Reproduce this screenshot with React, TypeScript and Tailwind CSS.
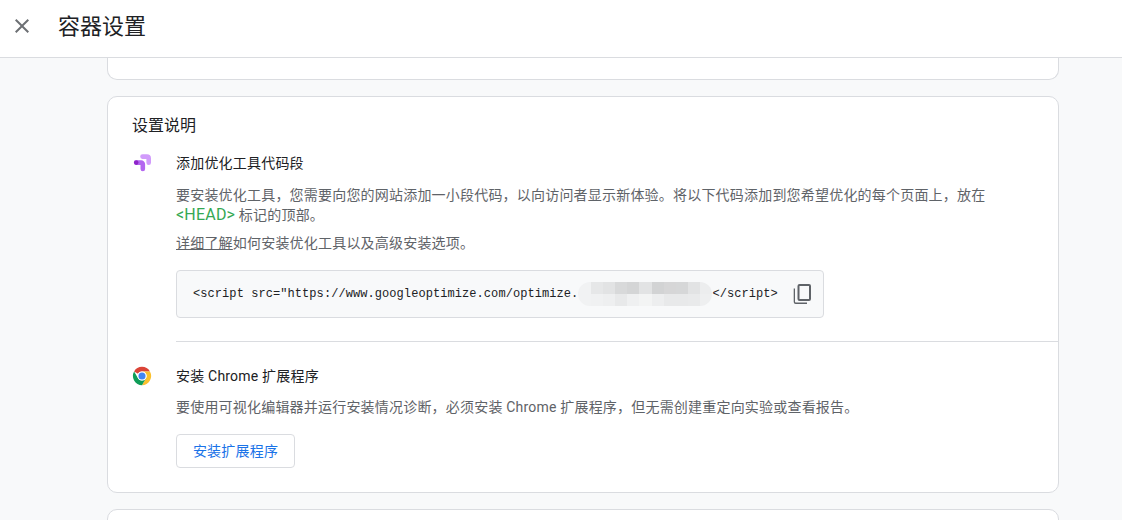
const fontStack = "font-['Roboto','Noto_Sans_CJK_SC',sans-serif]";

const blurTop = ["#f1f2f3", "#e6e7e8", "#e2e3e4", "#d8d9da", "#d4d5d6", "#e2e3e4", "#d2d3d4", "#d6d6d7", "#d6d7d8", "#e2e3e4", "#ecedee"];
const blurBottom = ["#f1f2f3", "#f0f1f2", "#eeeff0", "#e8e9ea", "#eff0f1", "#f3f4f4", "#edeeef", "#e8e9ea", "#e8e9ea", "#e9eaeb", "#eeeff0"];

function OptimizeIcon() {
  return (
    <svg width="20" height="20" viewBox="0 0 20 20" fill="none" strokeLinecap="round" strokeLinejoin="round" className="shrink-0">
      <path d="M10.5 3.6h4.4a1.8 1.8 0 0 1 1.8 1.8v4.4" stroke="#d19bfb" strokeWidth="4.6" />
      <path d="M4.3 9.6h4.9a1.6 1.6 0 0 1 1.6 1.6v4.7" stroke="#b366f0" strokeWidth="4.6" />
      <circle cx="4.2" cy="9.6" r="2.3" fill="#8e24c9" />
    </svg>
  );
}

function ChromeIcon() {
  return (
    <svg width="20" height="20" viewBox="0 0 48 48" className="shrink-0">
      <path d="M24 2a22 22 0 0 1 19.05 11H24a11 11 0 0 0-9.53 5.5L5 13.1A22 22 0 0 1 24 2z" fill="#db4437" />
      <path d="M43.05 13A22 22 0 0 1 24 46l9.53-16.5A11 11 0 0 0 33.53 18.5 11 11 0 0 0 24 13z" fill="#fbc02d" />
      <path d="M5 13.1l9.47 16.4A11 11 0 0 0 24 35a11 11 0 0 0 9.53-5.5L24 46A22 22 0 0 1 5 13.1z" fill="#0f9d58" />
      <circle cx="24" cy="24" r="11" fill="#fff" />
      <circle cx="24" cy="24" r="8.5" fill="#4285f4" />
    </svg>
  );
}

function CopyIcon() {
  return (
    <svg width="24" height="24" viewBox="0 0 24 24" fill="#5f6368">
      <path d="M16 2H8.5A2 2 0 0 0 6.5 4v13a2 2 0 0 0 2 2H18a2 2 0 0 0 2-2V6l0-2a2 2 0 0 0-2-2h-2zm2 15H8.5V4H18v13z" />
      <path d="M4 6.5H2.7V20a2 2 0 0 0 2 2H16v-1.5H4.7A.7.7 0 0 1 4 19.8V6.5z" />
    </svg>
  );
}

function BlurredId() {
  return (
    <span className="inline-flex h-[24px] w-[134px] shrink-0 flex-col overflow-hidden rounded-full">
      <span className="flex h-[12px]">
        {blurTop.map((color, i) => (
          <span key={i} className="h-full flex-1" style={{ backgroundColor: color }} />
        ))}
      </span>
      <span className="flex h-[12px]">
        {blurBottom.map((color, i) => (
          <span key={i} className="h-full flex-1" style={{ backgroundColor: color }} />
        ))}
      </span>
    </span>
  );
}

export default function App() {
  return (
    <div className={`h-[520px] w-[1122px] overflow-hidden bg-[#f8f9fa] text-[14px] tracking-[0.2px] text-[#5f6368] ${fontStack}`}>
      <header className="flex h-[58px] items-center border-b border-[#dadce0] bg-white pb-[5px]">
        <button className="ml-[10px] flex h-[24px] w-[24px] items-center justify-center text-[#6d7074]">
          <svg width="24" height="24" viewBox="0 0 24 24" fill="currentColor">
            <path d="M19 6.41 17.59 5 12 10.59 6.41 5 5 6.41 10.59 12 5 17.59 6.41 19 12 13.41 17.59 19 19 17.59 13.41 12z" />
          </svg>
        </button>
        <h1 className="ml-[24px] text-[22px] font-normal tracking-normal text-[#202124]">容器设置</h1>
      </header>

      <main className="ml-[107px] flex w-[952px] flex-col gap-[16px]">
        <div className="h-[22px] rounded-b-[10px] border border-t-0 border-[#dadce0] bg-white" />

        <section className="h-[397px] rounded-[10px] border border-[#dadce0] bg-white pt-[19px]">
          <h2 className="ml-[24px] text-[16px] leading-[20px] font-normal tracking-normal text-[#202124]">设置说明</h2>

          <div className="mt-[17px] flex pl-[24px]">
            <OptimizeIcon />
            <div className="ml-[24px] flex-1 pr-[40px]">
              <h3 className="text-[14px] leading-[20px] font-normal text-[#202124]">添加优化工具代码段</h3>
              <p className="mt-[12px] leading-[20px]">
                要安装优化工具，您需要向您的网站添加一小段代码，以向访问者显示新体验。将以下代码添加到您希望优化的每个页面上，放在
                <br />
                <span className="text-[16px] leading-[20px] text-[#34a853]">&lt;HEAD&gt;</span> 标记的顶部。
              </p>
              <p className="mt-[8px] leading-[20px]">
                <a className="text-[#5f6368] underline">详细了解</a>如何安装优化工具以及高级安装选项。
              </p>
              <div className="mt-[17px] flex h-[48px] w-[648px] items-center rounded-[4px] border border-[#dadce0] bg-[#f8f9fa] pl-[16px] font-['Liberation_Mono',monospace] text-[12px] tracking-[0.07px] whitespace-pre text-[#202124]">
                <span>&lt;script src="https://www.googleoptimize.com/optimize.</span>
                <BlurredId />
                <span>&lt;/script&gt;</span>
                <span className="ml-[13px] flex">
                  <CopyIcon />
                </span>
              </div>
            </div>
          </div>

          <hr className="mt-[23px] ml-[68px] border-[#dadce0]" />

          <div className="mt-[24px] flex pl-[24px]">
            <ChromeIcon />
            <div className="ml-[24px] flex-1">
              <h3 className="text-[14px] leading-[20px] font-normal text-[#202124]">安装 Chrome 扩展程序</h3>
              <p className="mt-[9px] leading-[24px]">要使用可视化编辑器并运行安装情况诊断，必须安装 Chrome 扩展程序，但无需创建重定向实验或查看报告。</p>
              <button className="mt-[15px] h-[34px] w-[119px] rounded-[4px] border border-[#dadce0] bg-white text-[14px] text-[#1a73e8]">安装扩展程序</button>
            </div>
          </div>
        </section>

        <div className="h-[40px] rounded-t-[10px] border border-[#dadce0] bg-white" />
      </main>
    </div>
  );
}
